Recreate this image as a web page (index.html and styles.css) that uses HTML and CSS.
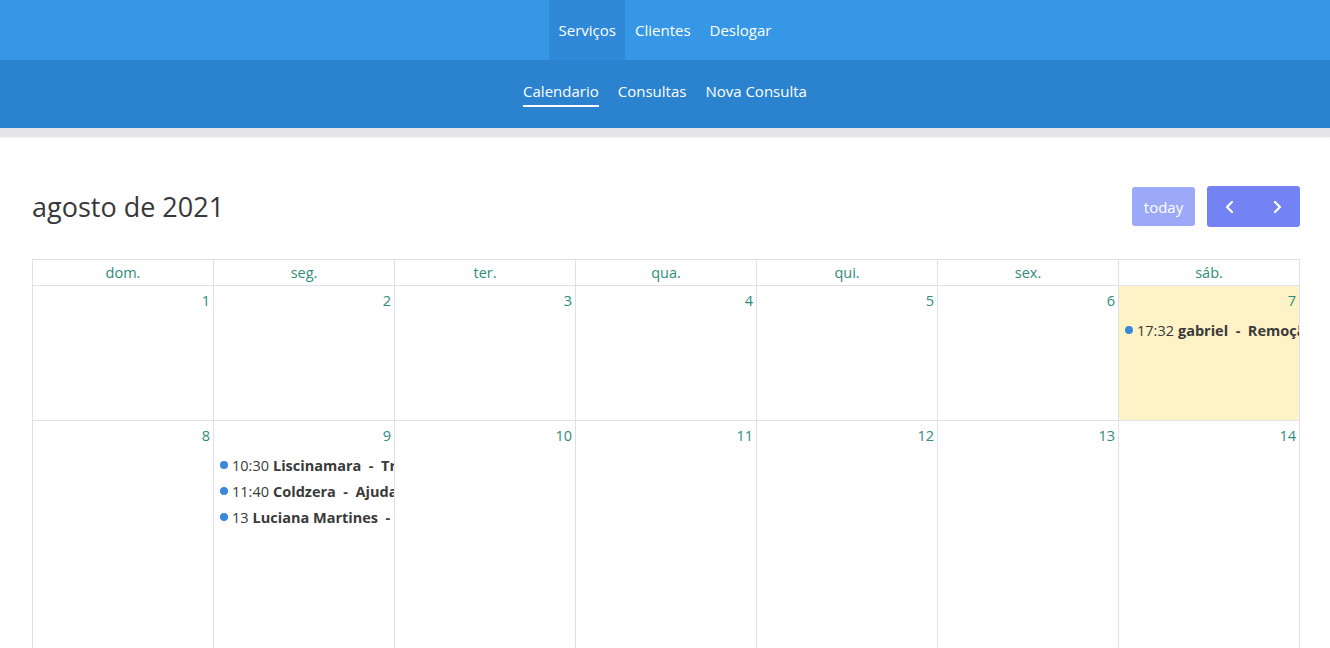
FILE: index.html
```html
<!DOCTYPE html>
<html lang="pt-BR">
<head>
    <meta charset="UTF-8">
    <meta name="viewport" content="width=device-width, initial-scale=1.0">
    <title>Calendario</title>
    <link rel="stylesheet" href="styles.css">
</head>
<body>
    <header>
        <nav class="main-nav">
            <a href="#" class="active">Serviços</a>
            <a href="#">Clientes</a>
            <a href="#">Deslogar</a>
        </nav>
        <nav class="sub-nav">
            <a href="#" class="active">Calendario</a>
            <a href="#">Consultas</a>
            <a href="#">Nova Consulta</a>
        </nav>
    </header>

    <div class="calendar">
        <div class="toolbar">
            <h2>agosto de 2021</h2>
            <div class="actions">
                <button class="btn btn-today" disabled>today</button>
                <div class="btn-group">
                    <button class="btn btn-arrow" aria-label="anterior">
                        <svg width="14" height="14" viewBox="0 0 14 14"><path d="M9 2 L4 7 L9 12" fill="none" stroke="#fff" stroke-width="2.2" stroke-linecap="round" stroke-linejoin="round"/></svg>
                    </button>
                    <button class="btn btn-arrow" aria-label="próximo">
                        <svg width="14" height="14" viewBox="0 0 14 14"><path d="M5 2 L10 7 L5 12" fill="none" stroke="#fff" stroke-width="2.2" stroke-linecap="round" stroke-linejoin="round"/></svg>
                    </button>
                </div>
            </div>
        </div>

        <div class="grid">
            <div class="day-name">dom.</div>
            <div class="day-name">seg.</div>
            <div class="day-name">ter.</div>
            <div class="day-name">qua.</div>
            <div class="day-name">qui.</div>
            <div class="day-name">sex.</div>
            <div class="day-name">sáb.</div>

            <div class="day"><span class="num">1</span></div>
            <div class="day"><span class="num">2</span></div>
            <div class="day"><span class="num">3</span></div>
            <div class="day"><span class="num">4</span></div>
            <div class="day"><span class="num">5</span></div>
            <div class="day"><span class="num">6</span></div>
            <div class="day today">
                <span class="num">7</span>
                <div class="event"><span class="dot"></span>17:32 <b>gabriel &nbsp;-&nbsp; Remoção de tártaro</b></div>
            </div>

            <div class="day"><span class="num">8</span></div>
            <div class="day">
                <span class="num">9</span>
                <div class="event"><span class="dot"></span>10:30 <b>Liscinamara &nbsp;-&nbsp; Tratamento de canal</b></div>
                <div class="event"><span class="dot"></span>11:40 <b>Coldzera &nbsp;-&nbsp; Ajuda no aparelho</b></div>
                <div class="event"><span class="dot"></span>13 <b>Luciana Martines &nbsp;-&nbsp; Limpeza</b></div>
            </div>
            <div class="day"><span class="num">10</span></div>
            <div class="day"><span class="num">11</span></div>
            <div class="day"><span class="num">12</span></div>
            <div class="day"><span class="num">13</span></div>
            <div class="day"><span class="num">14</span></div>
        </div>
    </div>
</body>
</html>
```

FILE: styles.css
```css
:root {
    --nav-color: #3597e5;
    --nav-active: #2f89d8;
    --sub-color: #2b83d0;
    --teal-color: #2f8c78;
    --border-color: #e2dfea;
    --text-color: #3b3b3b;
}

body {
    font-family: 'Open Sans', 'Noto Sans', sans-serif;
    margin: 0;
    padding: 0;
    background-color: #ffffff;
    color: var(--text-color);
    overflow: hidden;
}

header {
    border-bottom: 9px solid #e4e4e7;
    box-shadow: 0 1px 2px rgba(0, 0, 0, 0.06);
}

.main-nav {
    background-color: var(--nav-color);
    height: 60px;
    display: flex;
    justify-content: center;
}

.main-nav a {
    color: #ffffff;
    text-decoration: none;
    font-size: 15px;
    display: flex;
    align-items: center;
    padding: 0 9.5px;
}

.main-nav a.active {
    background-color: var(--nav-active);
}

.sub-nav {
    background-color: var(--sub-color);
    height: 68px;
    display: flex;
    justify-content: center;
    align-items: center;
    gap: 19px;
}

.sub-nav a {
    color: #ffffff;
    text-decoration: none;
    font-size: 15px;
    padding: 0 0 4px;
    border-bottom: 2px solid transparent;
    margin-top: -1px;
}

.sub-nav a.active {
    border-bottom-color: #ffffff;
}

.calendar {
    padding: 49px 30px 0 32px;
}

.toolbar {
    display: flex;
    justify-content: space-between;
    align-items: center;
    margin-bottom: 32px;
}

.toolbar h2 {
    margin: 0;
    font-size: 27px;
    font-weight: 400;
    color: #383838;
}

.actions {
    display: flex;
    align-items: center;
    gap: 12px;
}

.btn {
    border: none;
    color: #ffffff;
    font-family: inherit;
    font-size: 15px;
    cursor: pointer;
}

.btn-today {
    background-color: #9ba9f8;
    height: 39px;
    width: 63px;
    border-radius: 3px;
    padding: 0;
}

.btn-group {
    display: flex;
    background-color: #7383f4;
    border-radius: 3px;
    height: 41px;
}

.btn-arrow {
    background: transparent;
    width: 46.5px;
    display: flex;
    align-items: center;
    justify-content: center;
    padding: 0;
}

.grid {
    display: grid;
    grid-template-columns: repeat(7, 1fr);
    grid-template-rows: 26px 135px 260px;
    border-left: 1px solid var(--border-color);
    border-top: 1px solid var(--border-color);
}

.day-name {
    border-right: 1px solid var(--border-color);
    border-bottom: 1px solid var(--border-color);
    color: var(--teal-color);
    font-size: 14.5px;
    text-align: center;
    line-height: 25px;
}

.day {
    border-right: 1px solid var(--border-color);
    border-bottom: 1px solid var(--border-color);
    overflow: hidden;
    display: flex;
    flex-direction: column;
}

.day.today {
    background-color: #fef3c6;
}

.num {
    align-self: flex-end;
    color: var(--teal-color);
    font-size: 14.5px;
    padding: 5px 3px 0 0;
    line-height: 20px;
}

.event {
    white-space: nowrap;
    font-size: 14.5px;
    color: #3a3a3a;
    padding-left: 6px;
    line-height: 26px;
    display: flex;
    align-items: center;
}

.event:first-of-type {
    margin-top: 7px;
}

.event b {
    margin-left: 4px;
}

.dot {
    width: 8px;
    height: 8px;
    border-radius: 50%;
    background-color: #3788d8;
    margin-right: 4px;
    margin-top: -3px;
    flex-shrink: 0;
}
```
